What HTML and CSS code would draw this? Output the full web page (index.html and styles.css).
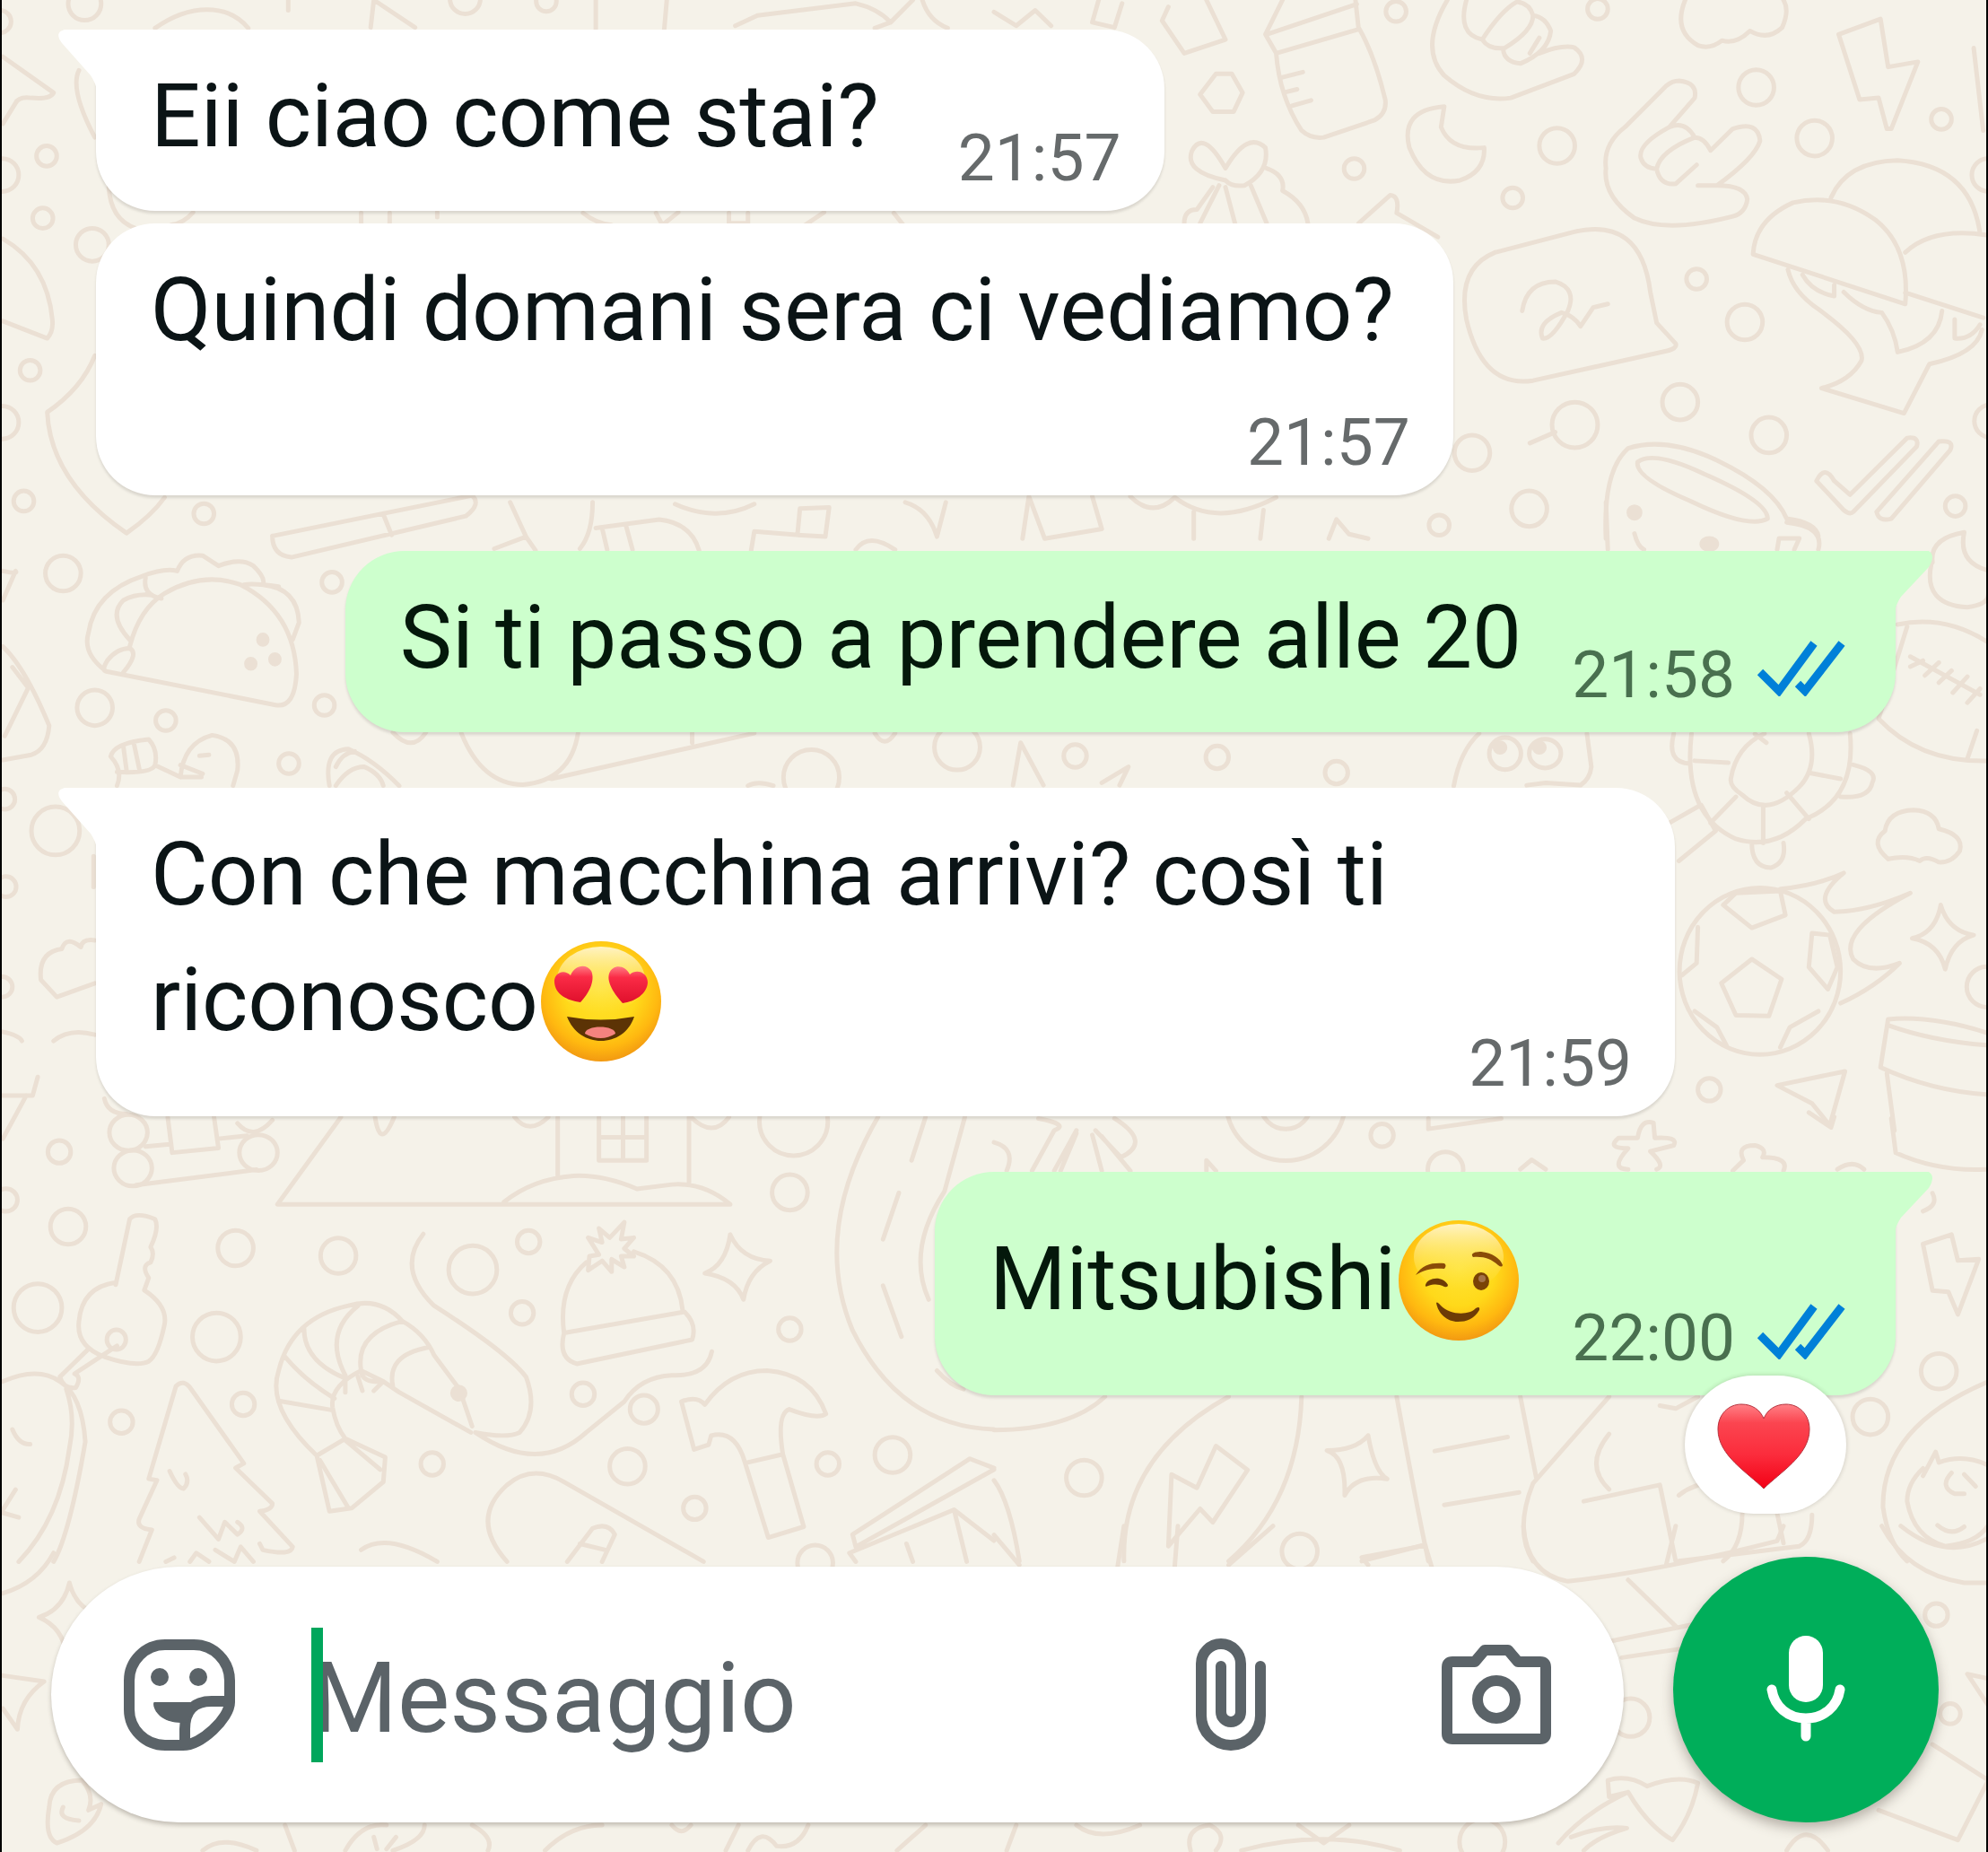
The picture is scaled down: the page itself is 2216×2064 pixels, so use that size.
FILE: index.html
```html
<!DOCTYPE html>
<html lang="it">

<head>
    <meta charset="UTF-8">
    <meta name="viewport" content="width=device-width, initial-scale=1.0">
    <title>Chat</title>
    <link rel="stylesheet" href="styles.css">
</head>

<body>
    <!-- wallpaper -->
    <svg class="wallpaper" viewBox="0 0 1568 1460" preserveAspectRatio="xMidYMid slice" aria-hidden="true">
        <g>
            <circle cx="67" cy="3" r="13" /><circle cx="367" cy="-1" r="12" /><circle cx="431" cy="1" r="8" />
            <circle cx="37" cy="123" r="8" /><circle cx="2" cy="138" r="13" /><circle cx="34" cy="172" r="8" />
            <circle cx="73" cy="193" r="13" /><circle cx="24" cy="292" r="8" /><circle cx="2" cy="333" r="13" />
            <circle cx="19" cy="395" r="8" /><circle cx="161" cy="405" r="8" /><circle cx="0" cy="17" r="9" />
            <circle cx="1101" cy="9" r="8" /><circle cx="1260" cy="7" r="8" /><circle cx="1385" cy="69" r="14" />
            <circle cx="1228" cy="115" r="14" /><circle cx="1431" cy="109" r="14" /><circle cx="1531" cy="94" r="8" />
            <circle cx="1068" cy="133" r="8" /><circle cx="1193" cy="156" r="8" /><circle cx="1338" cy="220" r="8" />
            <circle cx="1376" cy="254" r="14" /><circle cx="1242" cy="335" r="18" /><circle cx="1325" cy="317" r="14" />
            <circle cx="1395" cy="343" r="14" /><circle cx="1161" cy="357" r="14" /><circle cx="1206" cy="401" r="14" />
            <circle cx="1135" cy="414" r="8" /><circle cx="1542" cy="399" r="8" /><circle cx="1568" cy="138" r="13" />
            <circle cx="1570" cy="332" r="13" /><circle cx="50" cy="452" r="14" /><circle cx="262" cy="459" r="8" />
            <circle cx="75" cy="558" r="14" /><circle cx="131" cy="568" r="8" /><circle cx="256" cy="556" r="8" />
            <circle cx="228" cy="602" r="8" /><circle cx="44" cy="655" r="19" /><circle cx="4" cy="630" r="8" />
            <circle cx="5" cy="699" r="8" /><circle cx="2" cy="778" r="8" /><circle cx="640" cy="613" r="22" />
            <circle cx="755" cy="589" r="18" /><circle cx="848" cy="596" r="9" /><circle cx="960" cy="597" r="9" />
            <circle cx="1054" cy="609" r="9" /><circle cx="1348" cy="859" r="9" /><circle cx="1567" cy="778" r="16" />
            <circle cx="47" cy="908" r="9" /><circle cx="54" cy="967" r="14" /><circle cx="186" cy="984" r="14" />
            <circle cx="267" cy="990" r="14" /><circle cx="30" cy="1031" r="19" /><circle cx="171" cy="1054" r="19" />
            <circle cx="373" cy="1001" r="19" /><circle cx="417" cy="979" r="9" /><circle cx="412" cy="1035" r="9" />
            <circle cx="623" cy="940" r="14" /><circle cx="623" cy="1048" r="9" /><circle cx="96" cy="1121" r="9" />
            <circle cx="192" cy="1107" r="9" /><circle cx="460" cy="1099" r="9" /><circle cx="508" cy="1111" r="11" />
            <circle cx="341" cy="1154" r="9" /><circle cx="495" cy="1156" r="14" /><circle cx="548" cy="1189" r="9" />
            <circle cx="653" cy="1154" r="9" /><circle cx="704" cy="1147" r="14" /><circle cx="626" cy="884" r="27" />
            <circle cx="5" cy="946" r="9" /><circle cx="1090" cy="895" r="9" /><circle cx="1529" cy="1081" r="14" />
            <circle cx="1475" cy="1117" r="14" /><circle cx="855" cy="1165" r="14" /><circle cx="1025" cy="1223" r="14" />
            <circle cx="1140" cy="922" r="14" /><circle cx="1014" cy="868" r="47" /><circle cx="1014" cy="870" r="20" />
            <circle cx="1527" cy="1273" r="9" /><circle cx="1286" cy="1354" r="15" /><circle cx="1538" cy="1351" r="8" />
            <circle cx="1169" cy="1452" r="18" /><circle cx="643" cy="1232" r="14" />
        </g>
        <!-- top left: arch, hook, cone, hill, rolling pin -->
        <g transform="scale(.5 .2708)">
            <path d="M245 82C300 10 360 10 392 82M585 80L590 0L655 80M455 0V30M940 85V0M1048 85L1052 0M1160 75L1195 45L1350 10Q1385 25 1405 65L1380 82M1405 65L1440 0M1455 0Q1465 60 1495 82" />
            <path d="M5 165L85 270Q80 290 50 285Q30 280 25 300L5 360M5 695Q75 770 83 930Q85 965 75 985L5 935M125 205Q110 260 150 400M172 545Q175 640 215 665M305 618Q290 650 270 655" />
            <path d="M150 1035Q130 1130 75 1200Q80 1400 200 1552Q240 1500 260 1448M570 620V655M615 620V655M690 618V632M920 620Q940 650 965 655M1035 620L1045 655L1070 618M1150 620V650H1180V620M1410 620L1425 655M1300 618L1270 655" />
        </g>
        <!-- top right -->
        <g transform="translate(784 0) scale(.5 .2708)">
            <path d="M0 35L35 75L65 30L90 75M165 0L155 65L190 80L202 10M275 20L265 60L300 155L365 115L335 0M350 215H375L392 270L378 325H345L325 275Z" />
            <!-- bottle -->
            <path d="M455 0L428 100L445 155L575 85L570 0M430 100L572 12M445 155Q450 280 485 380Q500 405 520 400L600 350Q620 330 617 290Q600 160 575 80M455 225L487 210M460 268L478 260M470 308L500 292" />
            <!-- fists -->
            <path d="M715 0Q670 140 710 220Q760 300 815 285L915 215Q940 170 915 138Q895 130 860 155M745 0Q730 100 770 115Q800 30 825 5M770 115Q780 145 805 140Q850 90 850 45Q870 50 878 90Q875 150 830 185Q805 180 803 145M825 5Q845 10 850 45M860 110L845 155" />
            <path d="M710 310Q640 320 655 430Q680 545 735 525Q775 500 773 430Q720 440 705 370ZM1080 235Q1110 240 1105 285L1065 370Q1090 350 1105 400Q1120 400 1130 438L1165 375Q1205 350 1208 410Q1200 460 1140 540Q1185 540 1188 580Q1185 620 1165 630Q1060 680 1010 635Q960 570 965 490Q960 420 995 370L1060 250Q1070 235 1080 235M1065 370Q1015 420 1020 460Q1025 490 1045 492Q1050 440 1105 400M1045 492Q1050 540 1075 535L1108 480M1110 540H1140" />
            <!-- cloud and bolt -->
            <path d="M1090 0Q1070 90 1110 132Q1130 145 1148 118Q1170 130 1192 90Q1220 120 1243 80Q1255 30 1245 0M1332 100L1398 55L1410 195L1457 180L1415 375L1408 375L1395 285L1365 290Z" />
            <!-- bow -->
            <path d="M365 525Q300 500 312 440Q330 375 365 490Q400 380 428 430Q435 500 395 540Q375 545 365 525M355 540L325 650M365 545L380 650M405 540L430 650M345 545L320 610Q300 610 300 650M430 490Q460 510 455 555Q490 590 495 650M575 650L625 568Q640 570 635 620L700 690" />
            <!-- speech sticker -->
            <path d="M790 735L915 675Q1020 630 1035 850L1045 940L1075 1000Q1078 1015 1060 1022L850 1108Q770 1130 745 930Q730 780 790 735M833 905Q840 820 885 820Q920 840 905 905Q880 990 865 985Q855 940 895 910Q915 920 925 950L945 895L968 885M845 1290L885 1258" />
            <!-- sundae -->
            <path d="M1197 740Q1200 640 1260 590Q1330 560 1390 640Q1445 720 1437 885ZM1320 575Q1345 470 1425 467Q1540 480 1555 680M1437 735Q1480 660 1568 685M1437 852L1560 925M1252 785Q1260 850 1300 900Q1375 1000 1368 1050Q1350 1110 1305 1130L1435 1203L1475 1060Q1550 1030 1558 960M1275 800Q1290 850 1325 862V830M1340 850Q1370 905 1400 910Q1420 960 1425 1025Q1490 1000 1495 905M1515 930V985Q1540 990 1555 945M1545 140L1560 380" />
            <!-- cup and ticks -->
            <path d="M965 1568Q960 1370 1000 1305Q1060 1270 1140 1340Q1230 1420 1250 1510Q1295 1520 1300 1560M1015 1345Q1040 1310 1120 1380Q1220 1460 1220 1510Q1190 1540 1100 1460Q1010 1390 1015 1345M1297 1400Q1310 1350 1325 1400L1350 1440L1440 1275Q1460 1270 1455 1300L1355 1490Q1350 1500 1340 1485ZM1392 1490L1490 1285Q1515 1280 1508 1310L1415 1510Q1395 1520 1392 1490" />
            <ellipse class="dot" cx="1010" cy="1492" rx="9" ry="17" />
            <path d="M45 1568L55 1445L80 1568M155 1445L170 1540L80 1568M215 1445Q250 1510 285 1448Q350 1540 445 1448M315 1490V1568M425 1485L420 1568M528 1568L540 1512L560 1555L590 1568" />
        </g>
        <!-- middle left -->
        <g transform="translate(0 396) scale(.5 .2708)">
            <path d="M430 98L745 -20Q760 5 735 40L460 160Q430 155 430 98M605 35L618 95M805 0L830 100L780 135M935 0Q935 90 915 135M830 100L845 140M940 75L1040 50Q1090 60 1103 140M950 75L958 138M988 70L998 138M1185 140L1190 85L1260 95M1262 18L1308 15L1302 100L1258 95ZM1065 5Q1130 60 1190 5M1350 138Q1370 85 1412 138M1428 0Q1465 20 1478 100L1492 0" />
            <!-- taco -->
            <path d="M168 492Q130 440 140 380Q150 260 225 215Q260 190 280 200Q290 150 320 155L345 185Q380 160 400 185Q420 220 415 240Q470 250 472 350L462 400M205 420Q220 310 260 265Q320 200 380 240Q465 320 468 500Q465 600 435 590L168 492Q160 490 170 460Q185 425 205 425Q220 440 195 495M230 220Q225 270 255 280M205 400Q170 330 195 285Q215 265 240 270M385 240Q400 235 440 245" />
            <ellipse class="dot" cx="415" cy="400" rx="7" ry="14" />
            <ellipse class="dot" cx="434" cy="457" rx="7" ry="14" />
            <ellipse class="dot" cx="396" cy="470" rx="7" ry="14" />
            <path d="M5 200Q30 210 25 200L5 285M5 420Q40 480 78 650Q75 720 50 735L5 750M45 540L8 680M20 480L45 540" />
            <path d="M185 825Q195 780 175 740Q180 700 235 690Q250 720 245 765L285 800Q290 700 335 678Q380 690 375 780L368 825M195 710L200 780M212 705L220 775M245 765Q240 790 185 785M330 735L315 738M285 800L318 800M285 765L320 790M520 825Q510 720 550 718Q590 750 630 825M530 825Q550 770 575 770Q600 790 605 825M530 770Q540 730 560 725M620 670Q650 730 672 670M728 672Q760 820 825 822Q900 810 912 672M870 805L1190 672M1092 672V700M1380 672Q1395 720 1412 672M1180 825Q1195 810 1220 825" />
            <path d="M148 1030V1120M150 1275Q130 1270 128 1295Q105 1260 98 1300Q60 1310 65 1390L90 1440L150 1400M0 1540Q30 1550 35 1568M85 1568Q110 1530 150 1550" />
        </g>
        <!-- middle right: ghost, life ring, ball, ball of fire, pot -->
        <g transform="translate(784 396) scale(.5 .3159)">
            <path d="M965 0L968 118M1010 78Q1015 110 1025 118M1235 118L1238 90L1270 90L1262 118M1250 50Q1310 60 1300 118M1478 155Q1465 255 1535 262Q1568 255 1568 230M1530 75Q1475 90 1480 150M1530 75Q1520 150 1568 170" />
            <ellipse class="dot" cx="1128" cy="104" rx="12" ry="14" />
            <path d="M1425 305Q1500 280 1568 350M1440 310L1395 540Q1460 650 1568 645M1445 385L1555 480M1445 410L1465 395M1468 432L1490 400M1490 450L1510 420M1512 475L1535 435M1535 500L1555 465M1550 570L1535 640" />
            <path d="M30 706L42 600L78 706M170 700L212 660L198 706M725 708Q735 620 765 577M935 577L942 660Q940 690 925 706L870 700L840 706" />
            <ellipse cx="806" cy="627" rx="25" ry="40" /><ellipse cx="869" cy="627" rx="25" ry="36" />
            <ellipse class="dot" cx="798" cy="612" rx="8" ry="12" /><ellipse class="dot" cx="860" cy="612" rx="8" ry="12" />
            <path d="M1100 577Q1085 780 1170 840Q1230 870 1280 790Q1360 740 1350 577M1162 690Q1170 610 1215 577M1285 577Q1300 660 1270 710Q1220 790 1180 730Q1160 710 1162 690M1072 577Q1060 650 1098 652M1105 645L1158 650M1170 735L1130 800M1213 755V850M1250 725L1285 790M1285 675L1335 690M1200 578L1218 600M1355 655Q1395 670 1385 700Q1380 740 1335 735M1195 850Q1195 910 1225 912Q1250 900 1245 850M1065 800L1115 755L1138 820L1080 895" />
            <path d="M1410 890Q1380 850 1405 820Q1410 770 1450 768Q1485 770 1490 815Q1530 830 1523 870Q1510 900 1490 898Q1470 880 1460 895Q1440 880 1410 890" />
            <ellipse cx="1208" cy="1170" rx="127" ry="208" />
            <path d="M1150 1005L1170 975L1240 970L1248 1030L1195 1062ZM1195 1140L1242 1190L1222 1282L1170 1280L1147 1200ZM1290 1075L1318 1080L1330 1160L1315 1215L1285 1160ZM1110 1060L1108 1150L1085 1180M1105 1270L1140 1310L1155 1355M1300 1270L1255 1310L1240 1360M1240 965Q1300 955 1340 925Q1290 990 1325 1022Q1380 1020 1445 975Q1330 1070 1355 1140Q1380 1180 1428 1150Q1390 1210 1335 1250M1493 1005Q1505 1070 1545 1080Q1510 1095 1500 1165Q1490 1100 1448 1088Q1485 1075 1493 1005" />
            <path d="M1410 1290Q1480 1280 1568 1325M1410 1290L1398 1410Q1480 1470 1568 1478M1410 1305Q1480 1345 1568 1355M1408 1425L1420 1568M1235 1455L1342 1420L1318 1555L1290 1500Z" />
        </g>
        <!-- lower left: logs, house, key, hat, shrimp, tree, hammer, road -->
        <g transform="translate(0 849) scale(.5 .2437)">
            <path d="M60 0L52 60H5M42 60L5 200M165 70Q170 120 200 120M265 130L272 245L345 230L338 130M230 225L268 218M345 200L390 190M375 150Q400 210 430 140M215 350L405 300" />
            <ellipse cx="203" cy="180" rx="30" ry="58" /><ellipse cx="210" cy="295" rx="30" ry="58" /><ellipse cx="408" cy="245" rx="30" ry="58" />
            <path d="M538 130L438 412H1152Q1110 340 1060 348L1005 362Q950 315 905 320Q840 330 795 405M880 130V320M1087 130V345M945 130V270H1020V130M945 195H1020M983 130V270M592 130Q600 240 622 130M812 130Q835 190 865 130M1090 130Q1125 200 1150 130" />
            <path d="M183 672L205 460Q215 435 245 460Q252 490 238 550Q245 570 238 600Q222 610 235 650L228 690Q265 740 260 800Q250 900 235 920Q215 940 165 905Q120 870 125 790Q130 680 183 665M140 880L95 970Q100 1010 120 1005Q130 970 118 960L185 870M5 985Q60 935 95 985Q130 1030 135 1180Q110 1480 85 1568M105 1010Q120 1100 110 1200Q95 1430 30 1568M20 1140Q30 1190 48 1188M5 1400L25 1335M5 1410L30 1425" />
            <ellipse cx="184" cy="850" rx="15" ry="32" />
            <path d="M890 830Q880 680 925 600M1000 565Q1070 610 1077 755M890 828L1080 760Q1100 800 1092 850L910 928Q880 910 890 828M930 580L945 575L928 520L950 535L945 490L962 520L985 470L980 525L1000 520L985 555L1000 580L980 580L985 615L965 590V630L950 595L928 625ZM1152 510Q1170 590 1215 595Q1180 630 1173 720Q1160 650 1112 635Q1145 610 1152 510" />
            <path d="M668 508Q625 620 685 740Q800 890 830 970Q850 1080 820 1150Q800 1170 750 1150Q850 1290 925 1150L985 1050Q1010 970 1060 965Q1115 970 1123 888" />
            <path d="M743 1150L630 1020L605 985Q570 990 570 950Q520 1000 525 1070Q530 1130 545 1170L608 1230L605 1310L555 1395L520 1405L500 1225Q420 1070 440 950Q460 780 550 740Q600 710 635 790Q670 830 685 900L725 1010L745 1130M565 740Q510 830 545 965M635 790Q560 830 570 950L605 985M675 875Q610 900 620 1000M480 815Q480 920 545 975M450 905Q480 980 528 1040M440 1048L525 1078M500 1225L545 1170M505 1240L550 1395M545 1175L600 1270M545 980V1020M565 970L572 1015M605 985L590 1015" />
            <ellipse class="dot" cx="724" cy="1023" rx="10" ry="20" />
            <path d="M220 1568L240 1465Q215 1460 220 1430L248 1305L235 1300L278 1000Q290 975 302 1010L385 1250L372 1265L430 1380Q430 1400 410 1405L462 1520Q460 1550 415 1530L410 1510M268 1275Q280 1330 290 1332Q300 1310 293 1285M315 1425L345 1495L355 1440L375 1480Q390 1460 375 1440M262 1568L275 1555M300 1568L310 1540L330 1568M340 1530L370 1568L380 1520L400 1568" />
            <path d="M1075 1050Q1100 1030 1112 1060Q1150 950 1210 950Q1280 960 1303 1090Q1290 1110 1245 1075Q1225 1090 1235 1220L1268 1455L1212 1490L1175 1245Q1160 1140 1122 1160L1118 1190L1095 1205ZM1178 1248L1232 1222M1385 130Q1280 500 1345 820Q1420 1130 1568 1140M1522 130L1490 370Q1430 560 1465 720M1460 130L1438 270M1418 375L1393 525M1393 675L1422 840M1478 950Q1500 1000 1520 1010" />
            <path d="M800 1568Q740 1430 800 1320Q840 1250 890 1310L1110 1568M570 1530Q610 1470 690 1568M895 1568L935 1460Q960 1440 970 1480L950 1568M915 1510L955 1530M1345 1480L1530 1235L1568 1265M1345 1480L1350 1520L1568 1270M1340 1540L1505 1400L1568 1500M1340 1540L1350 1568M1505 1400L1525 1568M1430 1510L1440 1568" />
        </g>
        <!-- lower right: palm, leaf, chair, smiley -->
        <g transform="translate(784 877) scale(.5 .2358)">
            <path d="M0 100Q35 120 20 195M70 20Q120 40 95 60L60 195M130 60L95 195M155 75L170 195M170 80L215 195M130 70L105 195M190 20Q250 100 200 150L160 60M335 195V160L350 195M685 20V55L800 20M830 190L848 158L870 190M1000 190Q970 190 1000 120Q965 120 985 85L1015 85Q1020 20 1040 35L1042 85Q1080 80 1072 110L1035 130Q1060 180 1045 190M1165 195L1182 160Q1170 110 1200 110Q1220 120 1212 150Q1255 150 1245 195M1285 0L1320 50L1325 15M1415 20L1422 135Q1490 200 1568 190M1330 190Q1355 155 1372 190M1480 270Q1490 310 1465 330" />
            <path d="M1465 440L1510 408L1520 495L1553 490L1520 675L1505 600L1480 595ZM0 1062Q120 1060 175 950M370 950Q200 1150 205 1500M485 950Q480 1300 370 1500M350 1115L400 1195L345 1370L325 1325L275 1450L280 1210L320 1255ZM590 1080Q600 1200 620 1225Q570 1210 553 1280Q555 1150 525 1130Q570 1130 590 1080M635 950Q665 1300 685 1500M695 1132L810 1085M710 1312L828 1270M830 950L855 1220M970 950L850 1240Q820 1400 850 1500M970 1075Q930 1180 970 1260M930 1300L1050 1245L1075 1500M1080 1280Q1110 1230 1150 1240M580 1500L680 1445M0 1230Q25 1300 40 1500M1050 980L1075 990L1110 950" />
            <path d="M1568 900Q1400 1050 1402 1320Q1410 1440 1440 1500M1180 1340Q1180 1450 1150 1500M1235 1340L1245 1440M1290 1345Q1290 1430 1270 1450L1080 1500M1465 1215L1485 1135L1490 1170Q1530 1140 1568 1180M1465 1190Q1440 1240 1440 1300Q1450 1420 1500 1450Q1550 1440 1568 1380M1510 1205Q1490 1250 1515 1275H1530M1530 1210L1548 1250M1488 1380Q1510 1420 1530 1385" />
        </g>
        <!-- along the bottom edge -->
        <g transform="translate(0 1203) scale(.5 .2358)">
            <path d="M110 190Q120 270 150 290L118 350Q110 400 105 430Q100 340 62 305Q100 280 110 190M5 500L70 520Q30 580 28 680L5 610M5 225Q60 190 85 90M130 850Q80 850 78 940Q70 1040 90 1060Q150 1020 160 930L140 950Q150 900 130 850M100 940Q90 980 125 985M320 1085Q350 1030 405 1085M450 1000L465 1085M545 1085Q570 990 610 1000M620 1085Q670 1050 670 1000M590 1040L595 1080M625 1040L610 1080M770 1085Q780 1040 745 1000M860 1085Q900 1000 950 1000M1060 1000Q1075 1040 1090 1000M1145 1085L1165 1000M1180 1085Q1200 1000 1225 1070Q1260 1080 1275 1000M1415 1085L1460 1000" />
            <path transform="translate(1568 0)" d="M0 30L40 130M205 0L195 135M290 0L285 135M370 130L440 0M590 130L580 105L680 65L690 135M835 0Q840 160 905 185Q1050 150 1235 50L1245 0M1060 130L1075 0M1000 180L1075 335M960 390L1100 330M990 440L1085 410M1400 0Q1440 160 1530 190H1568M1430 0Q1500 120 1568 40M968 850Q1000 830 1030 870Q1080 830 1110 860Q1100 970 1070 1050Q1030 1000 1000 890L970 905ZM890 1060Q930 960 1000 890M910 1040Q960 1000 998 1010Q950 1040 930 1085M1480 730L1568 850L1520 1050L1395 950M1535 495L1568 510V600ZM130 1000Q165 1060 230 1000M310 1085Q300 1010 340 1000Q370 1030 350 1085M480 1000L520 1060L560 1000M390 1085Q520 1010 640 1085M1250 1085Q1280 980 1315 1085M20 1085L35 1000" />
        </g>
    </svg>

    <main class="chat">
        <article class="bubble incoming tail">
            <p class="text">Eii ciao come stai?</p>
            <div class="meta"><time>21:57</time></div>
        </article>

        <article class="bubble incoming stacked">
            <p class="text">Quindi domani sera ci vediamo?</p>
            <div class="meta"><time>21:57</time></div>
        </article>

        <article class="bubble outgoing tail">
            <p class="text">Si ti passo a prendere alle 20</p>
            <div class="meta">
                <time>21:58</time>
                <svg class="ticks" viewBox="0 0 99 63" role="img" aria-label="Letto">
                    <path d="M4 36L25 57L64 4M46 49L54 57L95 4" />
                </svg>
            </div>
        </article>

        <article class="bubble incoming tail">
            <p class="text">Con che macchina arrivi? così ti riconosco<svg class="emoji" viewBox="0 0 136 136" role="img" aria-label="Occhi a cuore">
                    <defs>
                        <radialGradient id="face" cx=".5" cy=".4" r=".62">
                            <stop offset="0" stop-color="#ffe433" />
                            <stop offset=".5" stop-color="#ffd91a" />
                            <stop offset=".78" stop-color="#ffb810" />
                            <stop offset="1" stop-color="#f09412" />
                        </radialGradient>
                        <linearGradient id="shine" x1="0" y1="0" x2="0" y2="1">
                            <stop offset="0" stop-color="#fff3c4" />
                            <stop offset="1" stop-color="#ffe44a" stop-opacity="0" />
                        </linearGradient>
                        <linearGradient id="heart" x1="0" y1="0" x2="0" y2="1">
                            <stop offset="0" stop-color="#ff7a83" />
                            <stop offset=".3" stop-color="#fa2b46" />
                            <stop offset="1" stop-color="#e0102c" />
                        </linearGradient>
                    </defs>
                    <circle cx="68" cy="68" r="67" fill="url(#face)" />
                    <ellipse cx="68" cy="44" rx="49" ry="37" fill="url(#shine)" />
                    <path d="M45 69C30 67 17 60 16 47C15 37 26 31 34 39C38 28 51 25 57 34C62 45 54 60 45 69Z" fill="url(#heart)" />
                    <path d="M92 70C83 60 74 47 77 37C81 26 95 27 100 38C108 31 120 36 120 47C119 60 106 68 92 70Z" fill="url(#heart)" />
                    <path d="M30 85Q68 92 105 85C99 103 84 112 68 112S37 103 30 85Z" fill="#5c3305" />
                    <path d="M50 104C50 94 84 94 84 104Q68 114 50 104Z" fill="#f5837f" />
                </svg></p>
            <div class="meta"><time>21:59</time></div>
        </article>

        <article class="bubble outgoing tail">
            <p class="text">Mitsubishi<svg class="emoji" viewBox="0 0 136 136" role="img" aria-label="Occhiolino">
                    <circle cx="68" cy="68" r="67" fill="url(#face)" />
                    <ellipse cx="68" cy="42" rx="50" ry="37" fill="url(#shine)" />
                    <path d="M20 62C28 50 38 48 52 49Q55 51 52 55C38 54 30 56 20 62Z" fill="#8a4b08" />
                    <path d="M84 42C80 37 88 36 93 36C105 37 115 44 117 51Q116 54 112 51C104 44 96 41 84 42Z" fill="#8a4b08" />
                    <path d="M31 73C33 65 50 62 56 73Q56 76 52 75C45 72 41 72 34 74Q30 76 31 73Z" fill="#6d3b06" />
                    <ellipse cx="93" cy="69" rx="9" ry="10" fill="#7a4306" />
                    <circle cx="94" cy="66" r="4" fill="#a3734a" />
                    <path d="M43 93Q44 91 48 96C58 107 80 107 87 99Q92 96 91 101C85 111 77 114 67 114C55 114 45 105 43 93Z" fill="#6d3b06" />
                </svg></p>
            <div class="meta">
                <time>22:00</time>
                <svg class="ticks" viewBox="0 0 99 63" role="img" aria-label="Letto">
                    <path d="M4 36L25 57L64 4M46 49L54 57L95 4" />
                </svg>
            </div>
            <button class="reaction" type="button" aria-label="Reazione cuore">
                <svg viewBox="0 0 104 96" aria-hidden="true">
                    <defs>
                        <linearGradient id="love" x1="0" y1="0" x2="0" y2="1">
                            <stop offset="0" stop-color="#ff8086" />
                            <stop offset=".22" stop-color="#fb4550" />
                            <stop offset=".6" stop-color="#fb2c3c" />
                            <stop offset="1" stop-color="#f30015" />
                        </linearGradient>
                    </defs>
                    <path d="M52 95C34 77 1 58 1 29C1 12 13 1 27 1C39 1 48 7 52 17C56 7 65 1 77 1C91 1 103 12 103 29C103 58 70 77 52 95Z" fill="url(#love)" stroke="#b5323d" stroke-width="1" />
                </svg>
            </button>
        </article>
    </main>

    <form class="composer">
        <div class="field">
            <button class="icon-btn" type="button" aria-label="Sticker">
                <svg class="line" width="124" height="124" viewBox="0 0 124 124">
                    <path d="M46 6H78A40 40 0 0 1 118 46V70C118 88 86 118 66 118H46A40 40 0 0 1 6 78V46A40 40 0 0 1 46 6Z" />
                    <path d="M116 69H98Q68 69 68 100V116" />
                    <path class="solid" d="M34 70H78L72 92C52 96 34 86 33 72Q33 70 34 70Z" />
                    <circle class="solid" cx="40" cy="42" r="10" />
                    <circle class="solid" cx="83" cy="42" r="10" />
                </svg>
            </button>
            <div class="entry">
                <span class="caret"></span>
                <input class="message" type="text" placeholder="Messaggio" aria-label="Messaggio">
            </div>
            <button class="icon-btn" type="button" aria-label="Allega">
                <svg class="line" width="78" height="125" viewBox="0 0 78 125">
                    <path d="M72 31V86A33 33 0 0 1 6 86V28A22 22 0 0 1 50 28V82A11 11 0 0 1 28 82V31" />
                </svg>
            </button>
            <button class="icon-btn camera" type="button" aria-label="Fotocamera">
                <svg class="line" width="122" height="112" viewBox="0 0 122 112">
                    <path d="M12 19H37L48 6H74L85 19H110Q116 19 116 25V99Q116 105 110 105H12Q6 105 6 99V25Q6 19 12 19Z" />
                    <circle cx="61" cy="61" r="21" />
                </svg>
            </button>
        </div>
        <button class="mic" type="button" aria-label="Messaggio vocale">
            <svg width="88" height="120" viewBox="0 0 88 120">
                <rect x="25" y="0" width="38" height="74" rx="19" fill="#fff" />
                <path d="M6 60C9 79 24 92 44 92S79 79 82 60M44 92V112" />
            </svg>
        </button>
    </form>
</body>

</html>
```

FILE: styles.css
```css
* {
    box-sizing: border-box;
}

body {
    position: relative;
    display: flex;
    flex-direction: column;
    min-height: 100vh;
    margin: 0;
    border: solid #000;
    border-width: 0 2px;
    background-color: #f5f2e9;
    font-family: Roboto, "Liberation Sans", sans-serif;
    color: #0b1416;
    overflow-x: hidden;
}

.wallpaper {
    position: absolute;
    inset: 0;
    width: 100%;
    height: 100%;
    z-index: -1;
    fill: none;
    stroke: #ebe0d4;
    stroke-width: 5px;
    stroke-linejoin: round;
    stroke-linecap: round;
}

.wallpaper * {
    vector-effect: non-scaling-stroke;
}

.wallpaper .dot {
    fill: #ebe0d4;
}

/* messages */
.chat {
    display: flex;
    flex-direction: column;
    align-items: flex-start;
    padding: 33px 101px 0 105px;
}

.bubble {
    position: relative;
    display: flex;
    max-width: 1760px;
    border-radius: 66px;
    background-color: #fff;
    box-shadow: 0 3px 3px rgba(60, 50, 40, 0.14);
}

.bubble + .bubble {
    margin-top: 62px;
}

.bubble.stacked {
    flex-direction: column;
    margin-top: 14px;
}

.text {
    margin: 0;
    padding: 38px 0 47px 61px;
    font-size: 98px;
    line-height: 117px;
}

.stacked .text {
    padding-right: 66px;
}

.meta {
    display: flex;
    align-items: flex-end;
    align-self: flex-end;
    gap: 24px;
    margin-left: auto;
    padding: 0 48px 17px 88px;
    font-size: 73px;
    line-height: 84px;
    color: #666a6b;
}

.outgoing {
    align-self: flex-end;
    background-color: #cdffcd;
    color: #04180b;
}

.outgoing .meta {
    padding: 0 56px 22px 56px;
    color: #49704f;
}

.incoming.tail {
    border-top-left-radius: 0;
}

.outgoing.tail {
    border-top-right-radius: 0;
}

.tail::before {
    content: "";
    position: absolute;
    top: 0;
    width: 44px;
    height: 68px;
    background-color: inherit;
}

.incoming.tail::before {
    right: calc(100% - 1px);
    clip-path: path("M44 0V68Q43 60 37 51L5 15Q-4 3 8 0Z");
}

.outgoing.tail::before {
    left: calc(100% - 1px);
    clip-path: path("M0 0V68Q1 60 7 51L38 18Q46 5 38 0Z");
}

.emoji {
    width: 136px;
    height: 136px;
    margin: 15px 2px 13px;
    vertical-align: -49px;
}

.ticks {
    width: 99px;
    height: 63px;
    margin-bottom: 18px;
    fill: none;
    stroke: #0080d8;
    stroke-width: 9;
}

.reaction {
    position: absolute;
    right: 55px;
    bottom: -132px;
    width: 180px;
    height: 154px;
    padding: 4px 4px 0 0;
    border: 0;
    border-radius: 77px;
    background-color: #fff;
    box-shadow: 0 0 4px 1px rgba(60, 50, 40, 0.16);
}

.reaction svg {
    display: block;
    width: 104px;
    height: 96px;
    margin: 0 auto;
}

/* composer */
.composer {
    display: flex;
    align-items: flex-end;
    gap: 55px;
    margin-top: auto;
    padding: 0 53px 33px 55px;
}

.field {
    flex: 1;
    display: flex;
    align-items: center;
    min-width: 0;
    height: 285px;
    padding: 0 81px;
    border-radius: 143px;
    background-color: #fff;
    box-shadow: 0 3px 5px rgba(60, 50, 40, 0.28);
}

.icon-btn {
    display: flex;
    padding: 0;
    border: 0;
    background: none;
}

.camera {
    margin-left: 196px;
}

.line {
    fill: none;
    stroke: #5b6368;
    stroke-width: 12;
    stroke-linecap: round;
    stroke-linejoin: round;
}

.line .solid {
    fill: #5b6368;
    stroke: none;
}

.entry {
    position: relative;
    flex: 1;
    display: flex;
    align-items: center;
    min-width: 0;
    height: 150px;
    margin-left: 85px;
}

.caret {
    position: absolute;
    left: 0;
    width: 13px;
    height: 150px;
    background-color: #00a65c;
}

.message {
    width: 100%;
    padding: 8px 0 0;
    border: 0;
    outline: 0;
    background: none;
    font: 110px Roboto, "Liberation Sans", sans-serif;
    color: #0b1416;
}

.message::placeholder {
    color: #5b6368;
    opacity: 1;
}

.mic {
    display: flex;
    align-items: center;
    justify-content: center;
    width: 296px;
    height: 296px;
    padding: 0;
    border: 0;
    border-radius: 50%;
    background-color: #00ae5a;
    box-shadow: 0 6px 14px rgba(60, 50, 40, 0.35);
}

.mic path {
    fill: none;
    stroke: #fff;
    stroke-width: 11;
    stroke-linecap: round;
}
```
